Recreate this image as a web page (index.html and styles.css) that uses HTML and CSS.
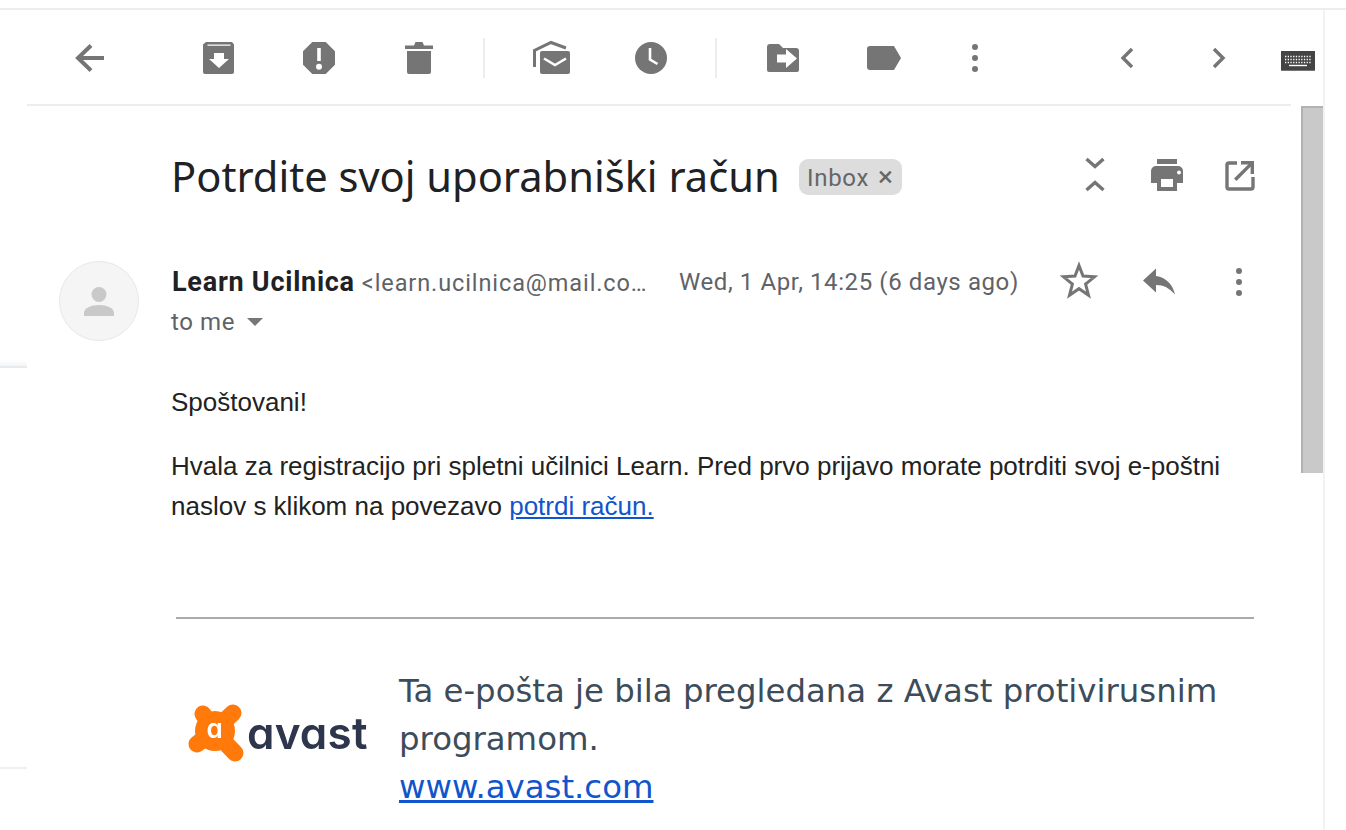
FILE: index.html
```html
<!DOCTYPE html>
<html lang="sl">
<head>
<meta charset="utf-8">
<title>Potrdite svoj uporabniški račun</title>
<link rel="stylesheet" href="styles.css">
</head>
<body>
<div class="top-rule"></div>
<div class="frame">
  <main class="mail">
    <div class="toolbar">
      <svg class="ico back" viewBox="0 0 48 48"><path d="M38 24H12M25 11.500 12 24l13 12.500" fill="none" stroke="#757575" stroke-width="4"/></svg>
      <svg class="ico first-group" viewBox="0 0 48 48"><path fill-rule="evenodd" d="M11 8h26l2 2.500V38a2 2 0 0 1-2 2H10a2 2 0 0 1-2-2V10.500ZM12.500 10.500v1.300h23v-1.300ZM19 19v6h-5l10 9 10-9h-5v-6Z" fill="#757575"/></svg>
      <svg class="ico gap" viewBox="0 0 48 48"><path fill-rule="evenodd" d="M17.300 8h13.400L40 17.300v13.400L30.700 40H17.300L8 30.700V17.300ZM22.200 14v13h3.600V14ZM24 29.800a3 3 0 1 0 0 6 3 3 0 0 0 0-6Z" fill="#757575"/></svg>
      <svg class="ico gap" viewBox="0 0 48 48"><path d="M10 11.500h9l1.500-3.500h7l1.500 3.500h9v3.500H10ZM12 17h24v21a2 2 0 0 1-2 2H14a2 2 0 0 1-2-2Z" fill="#757575"/></svg>
      <div class="tool-divider"></div>
      <svg class="ico" viewBox="0 0 48 48"><path d="M7.500 33V16.500L24 8.500l15 5.500" fill="none" stroke="#757575" stroke-width="3"/><path d="M13 21v-2a2 2 0 0 1 2-2h26a2 2 0 0 1 2 2v19a2 2 0 0 1-2 2H15a2 2 0 0 1-2-2Z" fill="#757575"/><path d="M17 24.500l11 6.500 11-6.500" fill="none" stroke="#fff" stroke-width="2.600"/></svg>
      <svg class="ico gap" viewBox="0 0 48 48"><circle cx="24" cy="24" r="16" fill="#757575"/><path d="M23 14v11.500l7.500 4.500" fill="none" stroke="#fff" stroke-width="2.600"/></svg>
      <div class="tool-divider"></div>
      <svg class="ico" viewBox="0 0 48 48"><path d="M11 10h9l4 4h13a3 3 0 0 1 3 3v19a2 2 0 0 1-2 2H10a2 2 0 0 1-2-2V13a3 3 0 0 1 3-3Z" fill="#757575"/><path d="M18 20.500h9V15l11 9.500L27 34v-5.500h-9Z" fill="#fff"/></svg>
      <svg class="ico label-gap" viewBox="0 0 48 48"><path d="M10 12h24l7 12-7 12H10a3 3 0 0 1-3-3V15a3 3 0 0 1 3-3Z" fill="#757575"/></svg>
      <svg class="ico dots-gap" viewBox="0 0 48 48"><circle cx="24" cy="13" r="3" fill="#757575"/><circle cx="24" cy="24" r="3" fill="#757575"/><circle cx="24" cy="35" r="3" fill="#757575"/></svg>
      <svg class="ico prev" viewBox="0 0 48 48"><path d="M29 15 20 24l9 9" fill="none" stroke="#757575" stroke-width="3.400"/></svg>
      <svg class="ico next" viewBox="0 0 48 48"><path d="M19 15l9 9-9 9" fill="none" stroke="#757575" stroke-width="3.400"/></svg>
      <svg class="keyboard" viewBox="0 0 34 20"><rect width="34" height="20" fill="#444"/><rect y="19" width="34" height="1" fill="#777"/><path d="M4 5.500h26M4 8.500h26M4 11.500h26" fill="none" stroke="#fff" stroke-width="1.300" stroke-dasharray="1.300 1.400"/><path d="M8 14.500h18" fill="none" stroke="#fff" stroke-width="1.400"/></svg>
    </div>
    <div class="toolbar-rule"></div>

    <div class="subject-row">
      <h1 class="subject">Potrdite svoj uporabniški račun</h1>
      <span class="badge">Inbox<span class="badge-x">×</span></span>
      <div class="subject-tools">
        <svg class="ico" viewBox="0 0 48 48"><path d="M15.500 8 24 15.500 32.500 8M15.500 39 24 31.500 32.500 39" fill="none" stroke="#757575" stroke-width="3.400"/></svg>
        <svg class="ico gap-24" viewBox="0 0 48 48"><path d="M14 8h20v5H14Z" fill="#757575"/><path fill-rule="evenodd" d="M13 15h22a5 5 0 0 1 5 5v12h-6v8H14v-8H8V20a5 5 0 0 1 5-5ZM18 28v8h12v-8ZM36 19.500a2 2 0 1 0 0 4 2 2 0 0 0 0-4Z" fill="#757575"/></svg>
        <svg class="ico gap-24" viewBox="0 0 48 48"><path d="M22 12H14a2 2 0 0 0-2 2v22a2 2 0 0 0 2 2h22a2 2 0 0 0 2-2V26" fill="none" stroke="#757575" stroke-width="3.400"/><path d="M26 10h13v13h-3.400v-7.200L21.500 30 19 27.500 33.200 13.400H26Z" fill="#757575"/></svg>
      </div>
    </div>

    <div class="sender-row">
      <div class="avatar">
        <svg class="avatar-icon" viewBox="0 0 32 32"><circle cx="16" cy="9.500" r="7.500" fill="#c9c9c9"/><path d="M1 31v-3c0-5 7-8 15-8s15 3 15 8v3Z" fill="#c9c9c9"/></svg>
      </div>
      <div class="sender-text">
        <div class="sender-line">
          <strong class="sender-name">Learn Ucilnica</strong>
          <span class="sender-mail">&lt;learn.ucilnica@mail.com&gt;</span>
        </div>
        <div class="to-line">to me <span class="caret"></span></div>
      </div>
      <span class="date">Wed, 1 Apr, 14:25 (6 days ago)</span>
      <div class="sender-tools">
        <svg class="ico" viewBox="0 0 48 48"><path d="M24 7.500l4 10.500 11.500.8-8.900 7.300 2.900 11.200L24 30.700l-9.500 6.600 2.900-11.200-8.900-7.300L20 18Z" fill="none" stroke="#757575" stroke-width="3"/></svg>
        <svg class="ico gap-32" viewBox="0 0 48 48"><path d="M21 10.500 8 22.500l13 12V27c8 0 13 3 19 9.500-2-9-8-17-19-18.500Z" fill="#757575"/></svg>
        <svg class="ico gap-32" viewBox="0 0 48 48"><circle cx="24" cy="13" r="3" fill="#757575"/><circle cx="24" cy="24" r="3" fill="#757575"/><circle cx="24" cy="35" r="3" fill="#757575"/></svg>
      </div>
    </div>

    <div class="body-text">
      <p class="greeting">Spoštovani!</p>
      <p class="para">Hvala za registracijo pri spletni učilnici Learn. Pred prvo prijavo morate potrditi svoj e-poštni naslov s klikom na povezavo <a class="link" href="#">potrdi račun.</a></p>
    </div>

    <div class="sig-rule"></div>
    <div class="signature">
      <div class="logo">
        <svg class="splat" viewBox="0 0 58 60"><g fill="none" stroke="#ff7a0a" stroke-width="17" stroke-linecap="round"><path d="M26 28 45 10M26 28 15 11M26 28 9 41M26 28 47 50"/></g><circle cx="27" cy="28" r="20" fill="#ff7a0a"/><text x="18.500" y="35" class="splat-a">a</text></svg>
        <span class="logo-word">avast</span>
      </div>
      <div class="sig-text">Ta e-pošta je bila pregledana z Avast protivirusnim programom.<br><a class="link" href="#">www.avast.com</a></div>
    </div>
  </main>
  <div class="scroll-thumb"></div>
</div>
<div class="edge edge-a"></div>
<div class="edge edge-b"></div>
</body>
</html>
```
FILE: styles.css
```css
* { box-sizing: border-box; }
html, body { margin: 0; height: 830px; overflow: hidden; background: #fff; }
body { font-family: "Liberation Sans", Arial, sans-serif; position: relative; }
.top-rule { margin-top: 8px; height: 2px; background: #ebeef1; }
.frame { position: relative; width: 1325px; height: 820px; border-right: 2px solid #f0f2f4; overflow: hidden; }
.mail { width: 1323px; }
.ico { width: 48px; height: 48px; flex: none; display: block; }

.toolbar { display: flex; align-items: center; height: 94px; padding: 2px 0 0 66px; }
.back { margin-right: 81px; }
.first-group { margin: 0; }
.gap { margin-left: 52px; }
.tool-divider { width: 2px; height: 40px; background: #ebeef1; margin: 0 42px 0 40px; flex: none; }
.label-gap { margin-left: 53px; }
.dots-gap { margin-left: 43px; }
.prev { margin-left: 104px; }
.next { margin-left: 44px; }
.keyboard { width: 34px; height: 20px; margin-left: 38px; margin-top: 6px; flex: none; display: block; }
.toolbar-rule { height: 2px; margin-left: 27px; width: 1264px; background: #ebeef1; }

.subject-row { display: flex; align-items: center; height: 142px; padding-left: 171px; }
.subject { margin: -2px 0 0; font: 400 41.650px/56px "Noto Sans", sans-serif; color: #202124; white-space: nowrap; width: 628px; flex: none; }
.badge { flex: none; width: 103px; height: 36px; border-radius: 9px; background: #dddddd; color: #666; font: 400 24px/38px Roboto, sans-serif; padding-left: 8px; letter-spacing: .7px; white-space: nowrap; }
.badge-x { font-size: 28px; line-height: 28px; color: #666; margin-left: 9px; }
.subject-tools { display: flex; margin: -4px 0 0 169px; }
.gap-24 { margin-left: 24px; }

.sender-row { display: flex; align-items: flex-start; height: 134px; padding: 13px 0 0 59px; position: relative; }
.avatar { width: 80px; height: 80px; border-radius: 50%; background: #f5f5f5; border: 1px solid #e8e8e8; display: flex; align-items: center; justify-content: center; flex: none; }
.avatar-icon { width: 32px; height: 32px; }
.sender-text { margin: 1px 0 0 33px; width: 476px; flex: none; }
.sender-line { display: flex; align-items: baseline; height: 40px; line-height: 40px; white-space: nowrap; overflow: hidden; }
.sender-name { font: 700 27px/40px Roboto, sans-serif; color: #202124; flex: none; letter-spacing: .75px; }
.sender-mail { margin-left: 7px; font: 400 23.500px/40px Roboto, sans-serif; color: #5f6368; letter-spacing: .9px; overflow: hidden; text-overflow: ellipsis; min-width: 0; }
.to-line { display: flex; align-items: center; font: 400 24px/40px Roboto, sans-serif; color: #5f6368; letter-spacing: .6px; margin-left: -1px; }
.caret { margin-left: 12px; border: 8px solid transparent; border-top-color: #777; border-bottom: 0; }
.date { flex: none; margin: 1px 0 0 31px; width: 339px; font: 400 24px/40px Roboto, sans-serif; color: #5f6368; letter-spacing: .6px; white-space: nowrap; }
.sender-tools { display: flex; margin: -3px 0 0 37px; }
.gap-32 { margin-left: 32px; }

.body-text { padding-left: 171px; width: 1260px; color: #222; font-size: 26px; line-height: 40px; }
.greeting { margin: 0 0 24px; }
.para { margin: 0; }
.link { color: #1155cc; }

.sig-rule { margin: 91px 0 0 176px; width: 1078px; height: 2px; background: #aaa; }
.signature { display: flex; padding: 48px 0 0 188px; }
.logo { width: 211px; flex: none; display: flex; align-items: center; height: 60px; margin-top: 36px; filter: blur(.6px); }
.splat { width: 58px; height: 60px; flex: none; display: block; }
.splat-a { font: 600 26px "Inter", sans-serif; font-feature-settings: "cv11"; fill: #fff; }
.logo-word { margin-left: 1px; font: 600 44px/58px "Inter", sans-serif; font-feature-settings: "cv11"; color: #2d364c; letter-spacing: .2px; }
.sig-text { width: 860px; font: 400 32.360px/48px "DejaVu Sans", sans-serif; color: #3d4c5a; }

.scroll-thumb { position: absolute; left: 1301px; top: 96px; width: 22px; height: 367px; background: #c9c9c9; border-left: 2px solid #b2b2b2; border-top: 2px solid #b2b2b2; }
.edge { position: absolute; left: 0; width: 27px; height: 2px; background: #eef0f2; }
.edge-a { top: 360px; height: 8px; border-radius: 0 7px 0 0; background: linear-gradient(#ffffff, #f4f4f4); border-bottom: 2px solid #e6ebf0; }
.edge-b { top: 767px; }
```
